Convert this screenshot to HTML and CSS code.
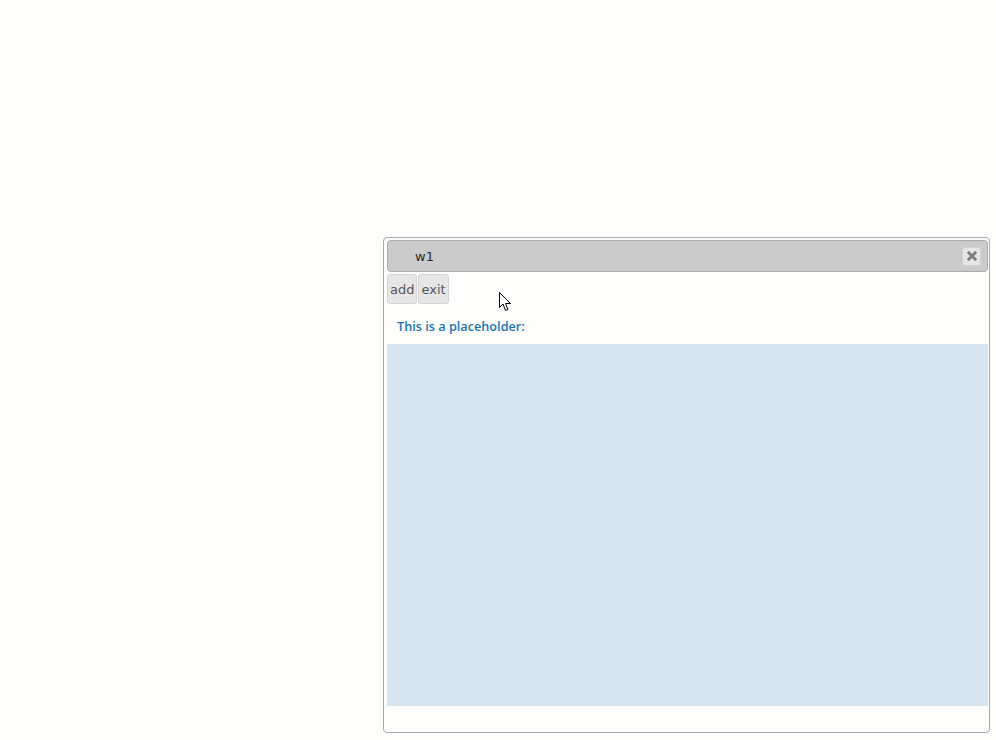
FILE: index.html
```html
<!DOCTYPE html>
<html lang="en">
<head>
    <meta charset="UTF-8">
    <title>w1</title>
    <link rel="stylesheet" href="styles.css">
</head>
<body>

    <!-- dialog window -->
    <div class="dialog">
        <div class="titlebar">
            <span class="title">w1</span>
            <button class="close" title="close">
                <svg width="10" height="10" viewBox="0 0 10 10">
                    <path d="M1.8 1.8 L8.2 8.2 M8.2 1.8 L1.8 8.2" stroke="#808080" stroke-width="3" stroke-linecap="square"/>
                </svg>
            </button>
        </div>
        <div class="toolbar">
            <button class="btn">add</button>
            <button class="btn">exit</button>
        </div>
        <div class="label">This is a placeholder:</div>
        <div class="placeholder"></div>
    </div>

    <!-- mouse pointer -->
    <svg class="cursor" width="14" height="21" viewBox="0 0 14 21">
        <path d="M0.5 0.5 L0.5 15.5 L4 12 L6.5 18.5 L9 17.5 L6.5 11.5 L11.5 11.5 Z" fill="#fff" stroke="#000" stroke-width="1"/>
    </svg>

</body>
</html>
```

FILE: styles.css
```css
html, body {
    margin: 0;
    height: 100%;
    background-color: #fdfdfb;
}
body {
    font-family: "DejaVu Sans", Verdana, sans-serif;
}
.dialog {
    position: absolute;
    left: 383px;
    top: 237px;
    width: 601px;
    height: 490px;
    padding: 2px 1px 2px 3px;
    border: 1px solid #aaa;
    border-radius: 4px;
    background: #fdfdfb;
    display: flex;
    flex-direction: column;
}
.titlebar {
    height: 30px;
    border: 1px solid #aaa;
    border-radius: 4px;
    background: #cbcbcb;
    display: flex;
    align-items: center;
    justify-content: space-between;
    padding: 0 6px 0 27px;
}
.title {
    font-size: 13px;
    color: #2a2a2a;
}
.close {
    width: 19px;
    height: 19px;
    padding: 0;
    border: 1px solid #d3d3d3;
    border-radius: 3px;
    background: #e6e6e6;
    display: flex;
    align-items: center;
    justify-content: center;
}
.toolbar {
    display: flex;
    gap: 1px;
    margin-top: 2px;
}
.btn {
    height: 30px;
    padding: 0 2px;
    border: 1px solid #d3d3d3;
    border-radius: 3px;
    background: #e6e6e6;
    color: #555;
    font-family: "DejaVu Sans", Verdana, sans-serif;
    font-size: 13px;
}
.label {
    padding: 13px 10px 9px;
    font-family: "Open Sans", "Noto Sans", sans-serif;
    font-weight: 600;
    font-size: 12.7px;
    color: #1c74b5;
}
.placeholder {
    height: 362px;
    background: #d9e5ee;
}
.cursor {
    position: absolute;
    left: 499px;
    top: 292px;
}
```
